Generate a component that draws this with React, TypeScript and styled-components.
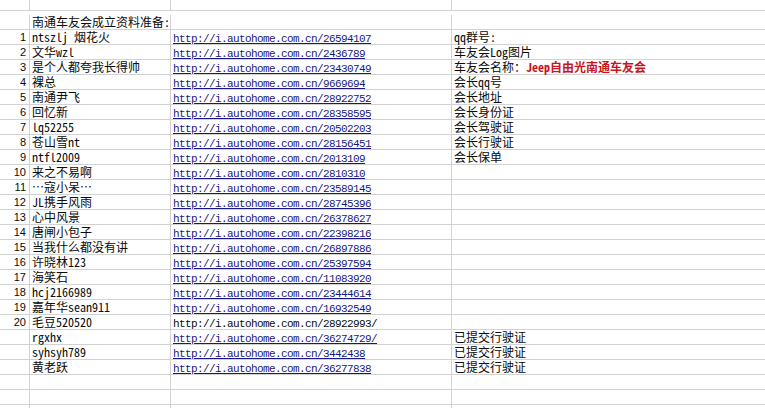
import React from "react";
import styled, { createGlobalStyle } from "styled-components";

const Global = createGlobalStyle`
  html, body { margin: 0; padding: 0; background: #fff; }
  body { width: 765px; height: 408px; overflow: hidden; }
`;

const Sheet = styled.div`
  display: grid;
  grid-template-columns: 30px 141px 281px 1fr;
  grid-auto-rows: 15px;
  width: 765px;
  height: 408px;
  overflow: hidden;
  font-family: "Noto Sans Mono CJK SC", "Noto Sans CJK SC", sans-serif;
  font-size: 12px;
  color: #0a0a0a;
`;

const Cell = styled.div<{ $first?: boolean; $last?: boolean }>`
  box-sizing: border-box;
  height: ${(p) => (p.$first ? "11px" : "15px")};
  border-bottom: 1px solid #d2d2d2;
  border-right: ${(p) => (p.$last ? "none" : "1px solid #d2d2d2")};
  line-height: 14px;
  white-space: nowrap;
  padding-left: 2px;
`;

const NumCell = styled(Cell)`
  font-family: "Liberation Sans", sans-serif;
  font-size: 11px;
  text-align: right;
  padding-left: 0;
  padding-right: 3px;
`;

const LinkText = styled.span<{ $plain?: boolean }>`
  font-family: "Liberation Mono", monospace;
  font-size: 11px;
  letter-spacing: -0.6px;
  color: ${(p) => (p.$plain ? "#0a0a0a" : "#1a1880")};
  text-decoration: ${(p) => (p.$plain ? "none" : "underline")};
`;

const Red = styled.span`
  color: #c8141c;
  font-weight: bold;
`;

type Row = { n?: number; name: string; id: string; note?: React.ReactNode; plain?: boolean };

const rows: Row[] = [
  { n: 1, name: "ntszlj  烟花火", id: "26594107", note: "qq群号:" },
  { n: 2, name: "文华wzl", id: "2436789", note: "车友会Log图片" },
  {
    n: 3,
    name: "是个人都夸我长得帅",
    id: "23430749",
    note: (
      <>
        车友会名称：<Red>Jeep自由光南通车友会</Red>
      </>
    ),
  },
  { n: 4, name: "裸总", id: "9669694", note: "会长qq号" },
  { n: 5, name: "南通尹飞", id: "28922752", note: "会长地址" },
  { n: 6, name: "回忆新", id: "28358595", note: "会长身份证" },
  { n: 7, name: "lq52255", id: "20502203", note: "会长驾驶证" },
  { n: 8, name: "苍山雪nt", id: "28156451", note: "会长行驶证" },
  { n: 9, name: "ntfl2009", id: "2013109", note: "会长保单" },
  { n: 10, name: "来之不易啊", id: "2810310" },
  { n: 11, name: "…寇小呆…", id: "23589145" },
  { n: 12, name: "JL携手风雨", id: "28745396" },
  { n: 13, name: "心中风景", id: "26378627" },
  { n: 14, name: "唐闸小包子", id: "22398216" },
  { n: 15, name: "当我什么都没有讲", id: "26897886" },
  { n: 16, name: "许晓林123", id: "25397594" },
  { n: 17, name: "海笑石", id: "11083920" },
  { n: 18, name: "hcj2166989", id: "23444614" },
  { n: 19, name: "嘉年华sean911", id: "16932549" },
  { n: 20, name: "毛豆520520", id: "28922993/", plain: true },
  { name: "rgxhx", id: "36274729/", note: "已提交行驶证" },
  { name: "syhsyh789", id: "3442438", note: "已提交行驶证" },
  { name: "黄老跃", id: "36277838", note: "已提交行驶证" },
];

export default function App() {
  return (
    <>
      <Global />
      <Sheet>
        <NumCell $first />
        <Cell $first />
        <Cell $first />
        <Cell $first $last />

        <NumCell />
        <Cell>南通车友会成立资料准备:</Cell>
        <Cell />
        <Cell $last />

        {rows.map((r, i) => (
          <React.Fragment key={i}>
            <NumCell>{r.n ?? ""}</NumCell>
            <Cell>{r.name}</Cell>
            <Cell>
              <LinkText $plain={r.plain}>http://i.autohome.com.cn/{r.id}</LinkText>
            </Cell>
            <Cell $last>{r.note ?? ""}</Cell>
          </React.Fragment>
        ))}

        {[0, 1, 2].map((k) => (
          <React.Fragment key={"e" + k}>
            <NumCell />
            <Cell />
            <Cell />
            <Cell $last />
          </React.Fragment>
        ))}
      </Sheet>
    </>
  );
}
